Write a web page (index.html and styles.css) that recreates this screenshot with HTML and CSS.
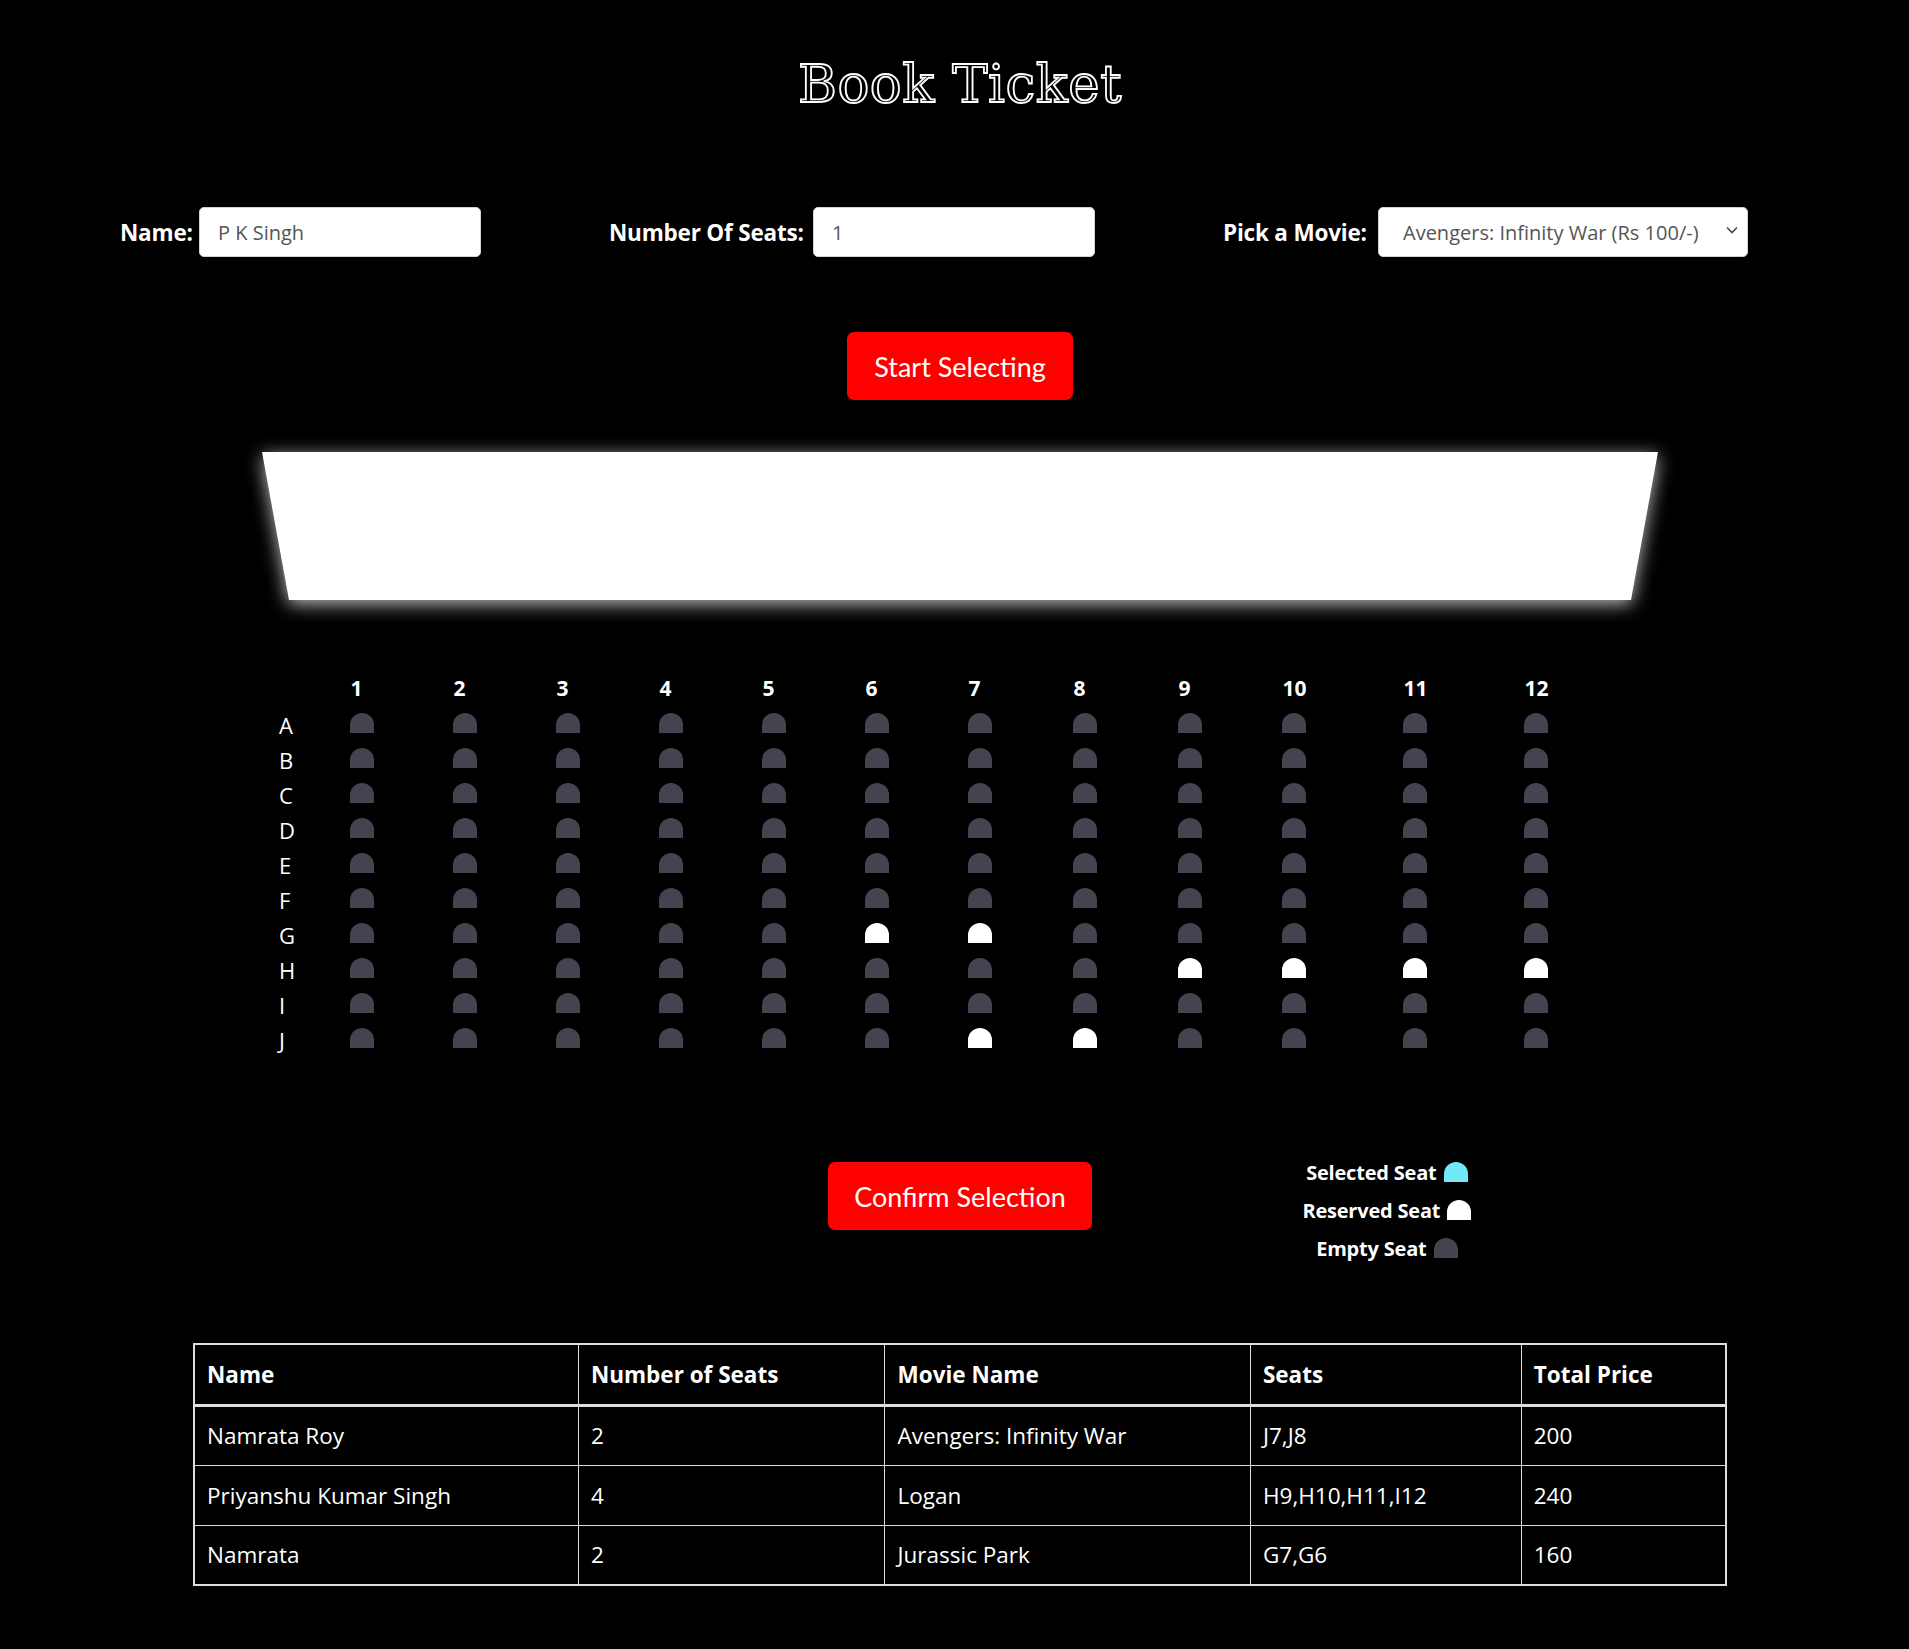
FILE: index.html
```html
<!DOCTYPE html>
<html lang="en">
<head>
<meta charset="utf-8">
<title>Book Ticket</title>
<link rel="stylesheet" href="styles.css">
</head>
<body>
<div class="page">
  <h1 class="title">Book Ticket</h1>

  <div class="form-row">
    <div class="field">
      <label class="field-label" for="name">Name:</label>
      <input class="field-input" id="name" type="text" value="P K Singh">
    </div>
    <div class="field">
      <label class="field-label" for="num">Number Of Seats:</label>
      <input class="field-input" id="num" type="text" value="1">
    </div>
    <div class="field field-movie">
      <label class="field-label" for="movie">Pick a Movie:</label>
      <div class="select-wrap">
        <select class="field-select" id="movie">
          <option>Avengers: Infinity War (Rs 100/-)</option>
          <option>Jurassic Park (Rs 80/-)</option>
          <option>Logan (Rs 60/-)</option>
        </select>
        <svg class="chevron" width="12" height="8" viewBox="0 0 12 8"><polyline points="1,1.5 6,6.5 11,1.5" fill="none" stroke="#444" stroke-width="1.6"/></svg>
      </div>
    </div>
  </div>

  <div class="center-row start-row">
    <button class="btn">Start Selecting</button>
  </div>

  <div class="screen-wrap">
    <div class="screen"></div>
  </div>

  <div class="seat-grid">
    <span></span>
    <span class="col-num">1</span><span class="col-num">2</span><span class="col-num">3</span><span class="col-num">4</span><span class="col-num">5</span><span class="col-num">6</span><span class="col-num">7</span><span class="col-num">8</span><span class="col-num">9</span><span class="col-num">10</span><span class="col-num">11</span><span class="col-num">12</span>

    <span class="row-label">A</span>
    <span class="seat"></span><span class="seat"></span><span class="seat"></span><span class="seat"></span><span class="seat"></span><span class="seat"></span><span class="seat"></span><span class="seat"></span><span class="seat"></span><span class="seat"></span><span class="seat"></span><span class="seat"></span>

    <span class="row-label">B</span>
    <span class="seat"></span><span class="seat"></span><span class="seat"></span><span class="seat"></span><span class="seat"></span><span class="seat"></span><span class="seat"></span><span class="seat"></span><span class="seat"></span><span class="seat"></span><span class="seat"></span><span class="seat"></span>

    <span class="row-label">C</span>
    <span class="seat"></span><span class="seat"></span><span class="seat"></span><span class="seat"></span><span class="seat"></span><span class="seat"></span><span class="seat"></span><span class="seat"></span><span class="seat"></span><span class="seat"></span><span class="seat"></span><span class="seat"></span>

    <span class="row-label">D</span>
    <span class="seat"></span><span class="seat"></span><span class="seat"></span><span class="seat"></span><span class="seat"></span><span class="seat"></span><span class="seat"></span><span class="seat"></span><span class="seat"></span><span class="seat"></span><span class="seat"></span><span class="seat"></span>

    <span class="row-label">E</span>
    <span class="seat"></span><span class="seat"></span><span class="seat"></span><span class="seat"></span><span class="seat"></span><span class="seat"></span><span class="seat"></span><span class="seat"></span><span class="seat"></span><span class="seat"></span><span class="seat"></span><span class="seat"></span>

    <span class="row-label">F</span>
    <span class="seat"></span><span class="seat"></span><span class="seat"></span><span class="seat"></span><span class="seat"></span><span class="seat"></span><span class="seat"></span><span class="seat"></span><span class="seat"></span><span class="seat"></span><span class="seat"></span><span class="seat"></span>

    <span class="row-label">G</span>
    <span class="seat"></span><span class="seat"></span><span class="seat"></span><span class="seat"></span><span class="seat"></span><span class="seat occupied"></span><span class="seat occupied"></span><span class="seat"></span><span class="seat"></span><span class="seat"></span><span class="seat"></span><span class="seat"></span>

    <span class="row-label">H</span>
    <span class="seat"></span><span class="seat"></span><span class="seat"></span><span class="seat"></span><span class="seat"></span><span class="seat"></span><span class="seat"></span><span class="seat"></span><span class="seat occupied"></span><span class="seat occupied"></span><span class="seat occupied"></span><span class="seat occupied"></span>

    <span class="row-label">I</span>
    <span class="seat"></span><span class="seat"></span><span class="seat"></span><span class="seat"></span><span class="seat"></span><span class="seat"></span><span class="seat"></span><span class="seat"></span><span class="seat"></span><span class="seat"></span><span class="seat"></span><span class="seat"></span>

    <span class="row-label">J</span>
    <span class="seat"></span><span class="seat"></span><span class="seat"></span><span class="seat"></span><span class="seat"></span><span class="seat"></span><span class="seat occupied"></span><span class="seat occupied"></span><span class="seat"></span><span class="seat"></span><span class="seat"></span><span class="seat"></span>
  </div>

  <div class="confirm-row">
    <div></div>
    <button class="btn btn-confirm">Confirm Selection</button>
    <ul class="legend">
      <li class="legend-item">Selected Seat <span class="seat selected"></span></li>
      <li class="legend-item">Reserved Seat <span class="seat occupied"></span></li>
      <li class="legend-item">Empty Seat <span class="seat"></span></li>
    </ul>
  </div>

  <table class="bookings">
    <thead>
      <tr>
        <th class="c-name">Name</th>
        <th class="c-num">Number of Seats</th>
        <th class="c-movie">Movie Name</th>
        <th class="c-seats">Seats</th>
        <th class="c-price">Total Price</th>
      </tr>
    </thead>
    <tbody>
      <tr><td>Namrata Roy</td><td>2</td><td>Avengers: Infinity War</td><td>J7,J8</td><td>200</td></tr>
      <tr><td>Priyanshu Kumar Singh</td><td>4</td><td>Logan</td><td>H9,H10,H11,I12</td><td>240</td></tr>
      <tr><td>Namrata</td><td>2</td><td>Jurassic Park</td><td>G7,G6</td><td>160</td></tr>
    </tbody>
  </table>
</div>
</body>
</html>
```

FILE: styles.css
```css
* { box-sizing: border-box; }

html, body {
  margin: 0;
  background: #000;
  color: #fff;
  font-family: "Open Sans", "Noto Sans", sans-serif;
}

.page {
  padding-left: 11px;
  padding-bottom: 60px;
}

.title {
  margin: 54px 0 0;
  text-align: center;
  font-family: "DejaVu Serif", "Liberation Serif", serif;
  font-weight: normal;
  font-size: 53px;
  line-height: 60px;
  color: #000;
  -webkit-text-stroke: 1.8px #fff;
  letter-spacing: 0.5px;
}

/* form */
.form-row {
  margin-top: 93px;
  padding-left: 109px;
  display: grid;
  grid-template-columns: 361px 486px 525px;
  column-gap: 128px;
  height: 50px;
}

.field {
  display: flex;
  align-items: center;
}

.field-label {
  flex: 1;
  font-weight: 700;
  font-size: 22.5px;
  white-space: nowrap;
  letter-spacing: -0.2px;
}

.field-input {
  width: 282px;
  height: 50px;
  border: 1px solid #ced4da;
  border-radius: 5px;
  background: #fff;
  color: #555;
  font-family: "Open Sans", "Noto Sans", sans-serif;
  font-size: 20px;
  padding: 0 18px;
}

.select-wrap {
  position: relative;
  width: 370px;
  height: 50px;
}

.field-select {
  appearance: none;
  -webkit-appearance: none;
  width: 100%;
  height: 100%;
  border: 1px solid #ced4da;
  border-radius: 5px;
  background: #fff;
  color: #555;
  font-family: "Open Sans", "Noto Sans", sans-serif;
  font-size: 20px;
  padding: 0 24px;
}

.chevron {
  position: absolute;
  right: 10px;
  top: 19px;
  pointer-events: none;
}

/* buttons */
.center-row {
  display: flex;
  justify-content: center;
}

.start-row { margin-top: 75px; }

.btn {
  height: 68px;
  padding: 0 27px;
  border: none;
  border-radius: 7px;
  background: #ff0000;
  color: #fff;
  font-family: "Lato", "Open Sans", sans-serif;
  font-size: 27px;
}

/* screen */
.screen-wrap {
  margin: 52px auto 0;
  width: 1396px;
  filter: drop-shadow(0 4px 9px rgba(255, 255, 255, 0.75));
}

.screen {
  height: 148px;
  background: #fff;
  clip-path: polygon(0 0, 100% 0, calc(100% - 27px) 100%, 27px 100%);
}

/* seats */
.seat-grid {
  margin-top: 63px;
  margin-left: 268px;
  display: grid;
  grid-template-columns: 31px repeat(7, 103px) 107px 103px 105px 137px 105px;
  grid-auto-rows: 35px;
  align-items: end;
}

.col-num {
  justify-self: center;
  width: 24px;
  padding-left: 1px;
  font-weight: 700;
  font-size: 21px;
  line-height: 21px;
  margin-bottom: -1px;
  white-space: nowrap;
}

.row-label {
  font-size: 22px;
  line-height: 22px;
  margin-bottom: -3px;
}

.seat {
  justify-self: center;
  display: block;
  width: 24px;
  height: 20px;
  background: #444451;
  border-radius: 12px 12px 0 0;
}

.seat.occupied { background: #fff; }
.seat.selected { background: #6feaf6; }

/* confirm + legend */
.confirm-row {
  margin-top: 105px;
  display: grid;
  grid-template-columns: 1fr auto 1fr;
  align-items: start;
}

.btn-confirm {
  margin-top: 9px;
  padding: 0 26px;
}

.legend {
  list-style: none;
  margin: 0 0 0 195px;
  padding: 0;
  width: 200px;
  display: flex;
  flex-direction: column;
  align-items: center;
}

.legend-item {
  height: 38px;
  display: flex;
  align-items: center;
  gap: 7px;
  font-weight: 700;
  font-size: 20px;
  letter-spacing: -0.2px;
  white-space: nowrap;
}

/* table */
.bookings {
  margin: 76px auto 0;
  width: 1534px;
  border-collapse: collapse;
  border: 2px solid #ddd;
  font-size: 22.5px;
}

.bookings th,
.bookings td {
  border: 1px solid #ddd;
  text-align: left;
  padding: 0 12px;
  height: 60px;
}

.bookings th {
  font-weight: 700;
  height: 61px;
  border-bottom: 3px solid #ddd;
}

.c-name { width: 385px; }
.c-num { width: 307px; }
.c-movie { width: 366px; }
.c-seats { width: 271px; }
.c-price { width: 205px; }
```
